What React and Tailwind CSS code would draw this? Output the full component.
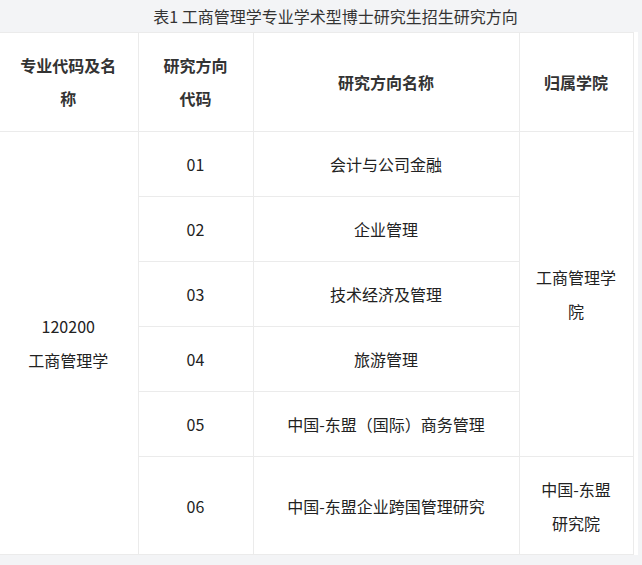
const rows = [
  { code: "01", name: "会计与公司金融" },
  { code: "02", name: "企业管理" },
  { code: "03", name: "技术经济及管理" },
  { code: "04", name: "旅游管理" },
  { code: "05", name: "中国-东盟（国际）商务管理" },
];

const cell = "border border-[#ebebeb] text-center align-middle px-2";

export default function App() {
  return (
    <div
      className="w-[642px] h-[565px] bg-[#f3f4f6] text-[#222] text-[16px] overflow-hidden"
      style={{ fontFamily: '"Noto Sans CJK SC", "Noto Sans", sans-serif' }}
    >
      {/* 表题 */}
      <div className="h-[32px] flex items-center justify-center pl-[29px] text-[#333] leading-none">
        表1 工商管理学专业学术型博士研究生招生研究方向
      </div>

      <div className="w-[638px] h-[523px] bg-white">
        <table className="table-fixed border-collapse w-[634px] -ml-px border-l-0">
          <colgroup>
            <col className="w-[139px]" />
            <col className="w-[115px]" />
            <col className="w-[266px]" />
            <col className="w-[114px]" />
          </colgroup>
          <thead>
            <tr className="h-[99px] font-bold text-[#333] leading-[33px]">
              <th className={`${cell} border-l-0`}>
                专业代码及名
                <br />
                称
              </th>
              <th className={cell}>
                研究方向
                <br />
                代码
              </th>
              <th className={cell}>研究方向名称</th>
              <th className={cell}>归属学院</th>
            </tr>
          </thead>
          <tbody className="leading-[34px]">
            {rows.map((r, i) => (
              <tr key={r.code} className="h-[65px]">
                {i === 0 && (
                  <td rowSpan={6} className={`${cell} border-l-0`}>
                    120200
                    <br />
                    工商管理学
                  </td>
                )}
                <td className={cell}>{r.code}</td>
                <td className={cell}>{r.name}</td>
                {i === 0 && (
                  <td rowSpan={5} className={cell}>
                    工商管理学
                    <br />院
                  </td>
                )}
              </tr>
            ))}
            <tr className="h-[98px]">
              <td className={cell}>06</td>
              <td className={cell}>中国-东盟企业跨国管理研究</td>
              <td className={cell}>
                中国-东盟
                <br />
                研究院
              </td>
            </tr>
          </tbody>
        </table>
      </div>
    </div>
  );
}
